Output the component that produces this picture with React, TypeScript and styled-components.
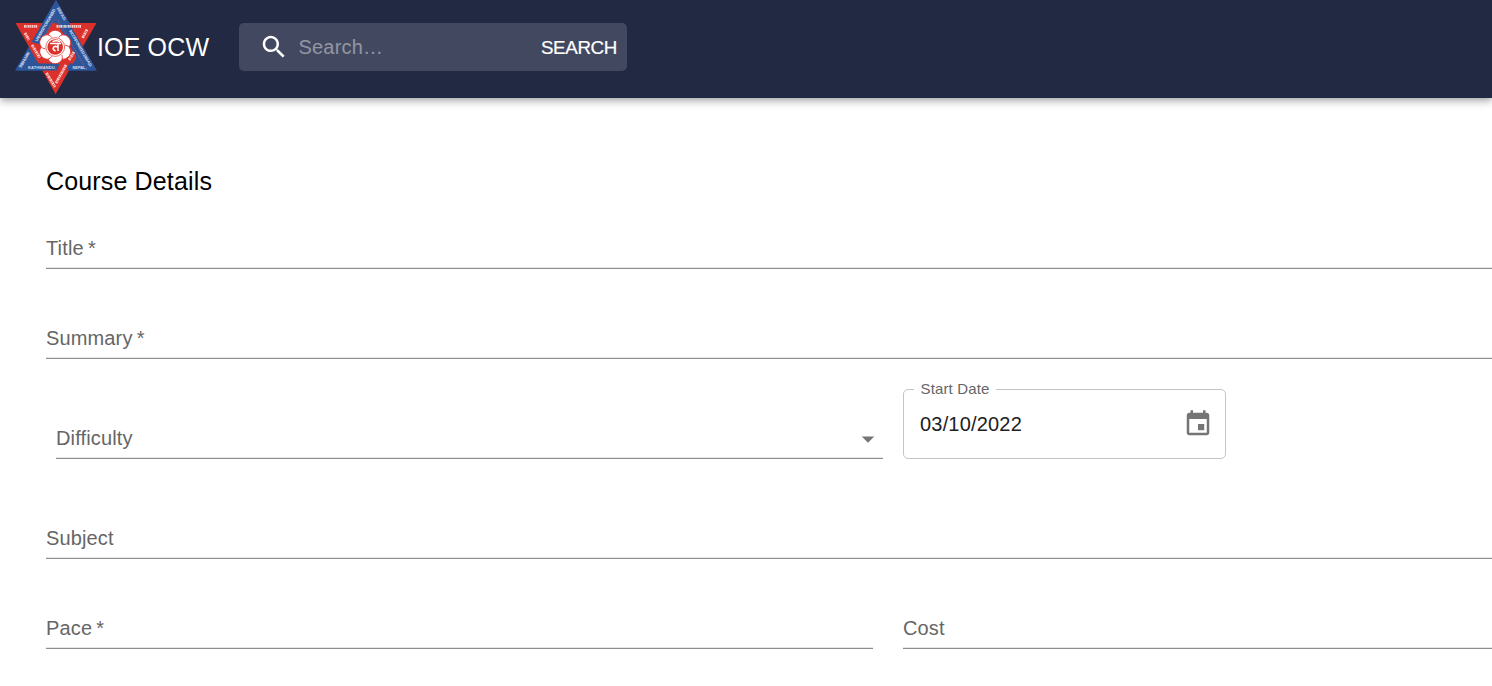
import React from 'react';
import styled, { createGlobalStyle } from 'styled-components';

const GlobalStyle = createGlobalStyle`
  *, *::before, *::after { box-sizing: border-box; }
  html, body { margin: 0; background: #fff; overflow: hidden; }
  body { font-family: "Liberation Sans", Arial, sans-serif; color: #000; }
`;

const Page = styled.div`
  width: 100%;
  height: 686px;
  overflow: hidden;
`;

const AppBar = styled.header`
  display: flex;
  align-items: flex-start;
  height: 98px;
  padding-left: 15px;
  background: #222943;
  color: #fff;
  box-shadow: 0 2.5px 5px -1.25px rgba(0, 0, 0, 0.2), 0 5px 6.25px 0 rgba(0, 0, 0, 0.14),
    0 1.25px 12.5px 0 rgba(0, 0, 0, 0.12);
`;

const Brand = styled.div`
  display: flex;
  align-items: flex-start;
  width: 224px;
`;

const LogoSvg = styled.svg`
  flex: none;
  width: 82px;
  height: 95px;
`;

const BrandName = styled.span`
  padding-top: 27px;
  font-size: 25px;
  line-height: 40px;
  letter-spacing: 0.15px;
  white-space: nowrap;
`;

const SearchBar = styled.div`
  display: flex;
  align-items: center;
  width: 388px;
  height: 48px;
  margin-top: 23px;
  padding: 0 10px 0 19.5px;
  border-radius: 5px;
  background: rgba(255, 255, 255, 0.15);
`;

const SearchInput = styled.input`
  flex: 1;
  min-width: 0;
  margin-left: 10px;
  padding: 0;
  border: 0;
  outline: 0;
  background: transparent;
  color: #fff;
  font: 20px "Liberation Sans", Arial, sans-serif;
  letter-spacing: 0.19px;
  &::placeholder { color: #fff; opacity: 0.42; }
`;

const SearchButton = styled.button`
  padding: 2px 0 0;
  border: 0;
  background: transparent;
  color: #fff;
  font: 18.75px "Liberation Sans", Arial, sans-serif;
  letter-spacing: -0.35px;
  -webkit-text-stroke: 0.2px #fff;
`;

const Icon = styled.svg<{ $color?: string; $drop?: number }>`
  flex: none;
  width: 30px;
  height: 30px;
  margin-top: ${(p) => p.$drop ?? 0}px;
  fill: ${(p) => p.$color ?? '#fff'};
`;

const Form = styled.main`
  width: 1720px;
  padding: 63px 20px 0 46px;
`;

const Heading = styled.h1`
  margin: 0;
  font-size: 25px;
  font-weight: 400;
  line-height: 40px;
  letter-spacing: 0.15px;
`;

const Row = styled.div<{ $height: number }>`
  display: flex;
  align-items: flex-end;
  height: ${(p) => p.$height}px;
`;

const Field = styled.div<{ $width?: number; $left?: number }>`
  display: flex;
  align-items: center;
  justify-content: space-between;
  flex: ${(p) => (p.$width ? 'none' : '1')};
  width: ${(p) => (p.$width ? `${p.$width}px` : 'auto')};
  height: 41px;
  margin-left: ${(p) => p.$left ?? 0}px;
  padding-right: ${(p) => (p.$width ? 0 : 10)}px;
  border-bottom: 1px solid #8e8e8e;
  box-shadow: inset 0 -1px 0 #e6e6e6;
`;

const Label = styled.label`
  color: #666;
  font-size: 20px;
  line-height: 28px;
  letter-spacing: 0.14px;
  word-spacing: -1.5px;
`;

const DateField = styled.fieldset`
  display: flex;
  align-items: center;
  justify-content: space-between;
  width: 323px;
  height: 75px;
  margin: 0 0 0 20px;
  padding: 0 12px 5px 16px;
  border: 1px solid #c4c4c4;
  border-radius: 5px;
`;

const DateLegend = styled.legend`
  height: 11px;
  margin-left: -6px;
  padding: 0 7px 0 6.5px;
  color: #666;
  font-size: 15px;
  line-height: 9px;
  letter-spacing: 0.14px;
`;

const DateValue = styled.span`
  color: #212121;
  font-size: 20px;
  line-height: 28px;
  letter-spacing: 0.19px;
`;

const petals = [0, 60, 120, 180, 240, 300];

function Logo() {
  return (
    <LogoSvg viewBox="15 0 82 95" aria-label="Tribhuvan University">
      <path d="M56 0L96.7 70.5H15z" fill="#2d5599" />
      <path d="M15.5 23H96.5L55.5 94z" fill="#dc302b" />
      <path d="M56 0L31.5 42L40 44.5L55 19L84 70.5H96.7z" fill="#2d5599" />
      <path d="M26 63.5H59L63 70.5H17z" fill="#2d5599" />
      <path d="M55.5 19L51.5 23L40 44M57 19L84 65" stroke="#8f5c7c" strokeWidth=".7" fill="none" />
      <path d="M53 23.2L55.5 19L58.3 23.2z" fill="#2d5599" />
      <path d="M69 63.5H82L86 70.5H66z" fill="#2d5599" />
      <path d="M59.5 63.5H69L64 79L55.5 94L53 84z" fill="#dc302b" />
      <g fill="#fff" stroke="#dc302b" strokeWidth=".8">
        {petals.map((angle) => (
          <ellipse key={angle} cx="55.2" cy="36.6" rx="7.2" ry="6.3" transform={`rotate(${angle} 55.2 47)`} />
        ))}
      </g>
      <circle cx="55.2" cy="47" r="10.2" fill="#fff" />
      <circle cx="55.2" cy="47" r="9.4" fill="none" stroke="#dc302b" strokeWidth=".7" />
      <circle cx="55.2" cy="47" r="7.8" fill="#dc302b" />
      <path d="M50 43.6H61M58 43.6V51M58 47C53 45 51.5 49 55.5 51.2M52.5 41.6C55 40.4 58 40.6 60 42" stroke="#fff" strokeWidth="1.5" fill="none" />
      <g stroke="#fff0ed" strokeWidth="2.8" strokeDasharray="1.8 .5 1 .5" fill="none" opacity=".82">
        <path d="M24 26.3H37.5M56.5 26.3H81" />
        <path d="M25 33L29 40M32 45L40 58" />
        <path d="M87 29.5L82.5 38M74 52L69 60M66 65L56 83M46.5 73L55 87" />
      </g>
      <g fill="#d4def0" fontFamily="Liberation Sans, Arial, sans-serif" fontWeight="700" fontSize="4">
        <text x="28" y="68.8" textLength="28">KATHMANDU,</text>
        <text x="72.5" y="68.8" textLength="14">NEPAL,</text>
        <text transform="translate(37.3 41.8) rotate(-60)" textLength="37">UNIVERSITY ORGANIZED</text>
        <text transform="translate(56.5 8) rotate(60)" textLength="15">1959 A.D.</text>
        <text transform="translate(69 31) rotate(60)" textLength="42">INCORPORATED 1966 A.D.</text>
        <text transform="translate(21 68.5) rotate(-60)" textLength="18">TRIBHUVAN</text>
      </g>
    </LogoSvg>
  );
}

export default function App() {
  return (
    <Page>
      <GlobalStyle />
      <AppBar>
        <Brand>
          <Logo />
          <BrandName>IOE OCW</BrandName>
        </Brand>
        <SearchBar>
          <Icon viewBox="0 0 24 24">
            <path d="M15.5 14h-.79l-.28-.27C15.41 12.59 16 11.11 16 9.5 16 5.91 13.09 3 9.5 3S3 5.91 3 9.5 5.91 16 9.5 16c1.61 0 3.09-.59 4.23-1.57l.27.28v.79l5 4.99L20.49 19l-4.99-5zm-6 0C7.01 14 5 11.99 5 9.5S7.01 5 9.5 5 14 7.01 14 9.5 11.99 14 9.5 14z" />
          </Icon>
          <SearchInput placeholder="Search…" />
          <SearchButton>SEARCH</SearchButton>
        </SearchBar>
      </AppBar>
      <Form>
        <Heading>Course Details</Heading>
        <Row $height={68}>
          <Field><Label>Title *</Label></Field>
        </Row>
        <Row $height={90}>
          <Field><Label>Summary *</Label></Field>
        </Row>
        <Row $height={100}>
          <Field $width={827} $left={10}>
            <Label>Difficulty</Label>
            <Icon viewBox="0 0 24 24" $color="#757575" $drop={2}><path d="M7 10l5 5 5-5z" /></Icon>
          </Field>
          <DateField>
            <DateLegend>Start Date</DateLegend>
            <DateValue>03/10/2022</DateValue>
            <Icon viewBox="0 0 24 24" $color="#757575">
              <path d="M17 12h-5v5h5v-5zM16 1v2H8V1H6v2H5c-1.11 0-1.99.9-1.99 2L3 19c0 1.1.89 2 2 2h14c1.1 0 2-.9 2-2V5c0-1.1-.9-2-2-2h-1V1h-2zm3 18H5V8h14v11z" />
            </Icon>
          </DateField>
        </Row>
        <Row $height={100}>
          <Field><Label>Subject</Label></Field>
        </Row>
        <Row $height={90}>
          <Field $width={827}><Label>Pace *</Label></Field>
          <Field $left={30}><Label>Cost</Label></Field>
        </Row>
      </Form>
    </Page>
  );
}
